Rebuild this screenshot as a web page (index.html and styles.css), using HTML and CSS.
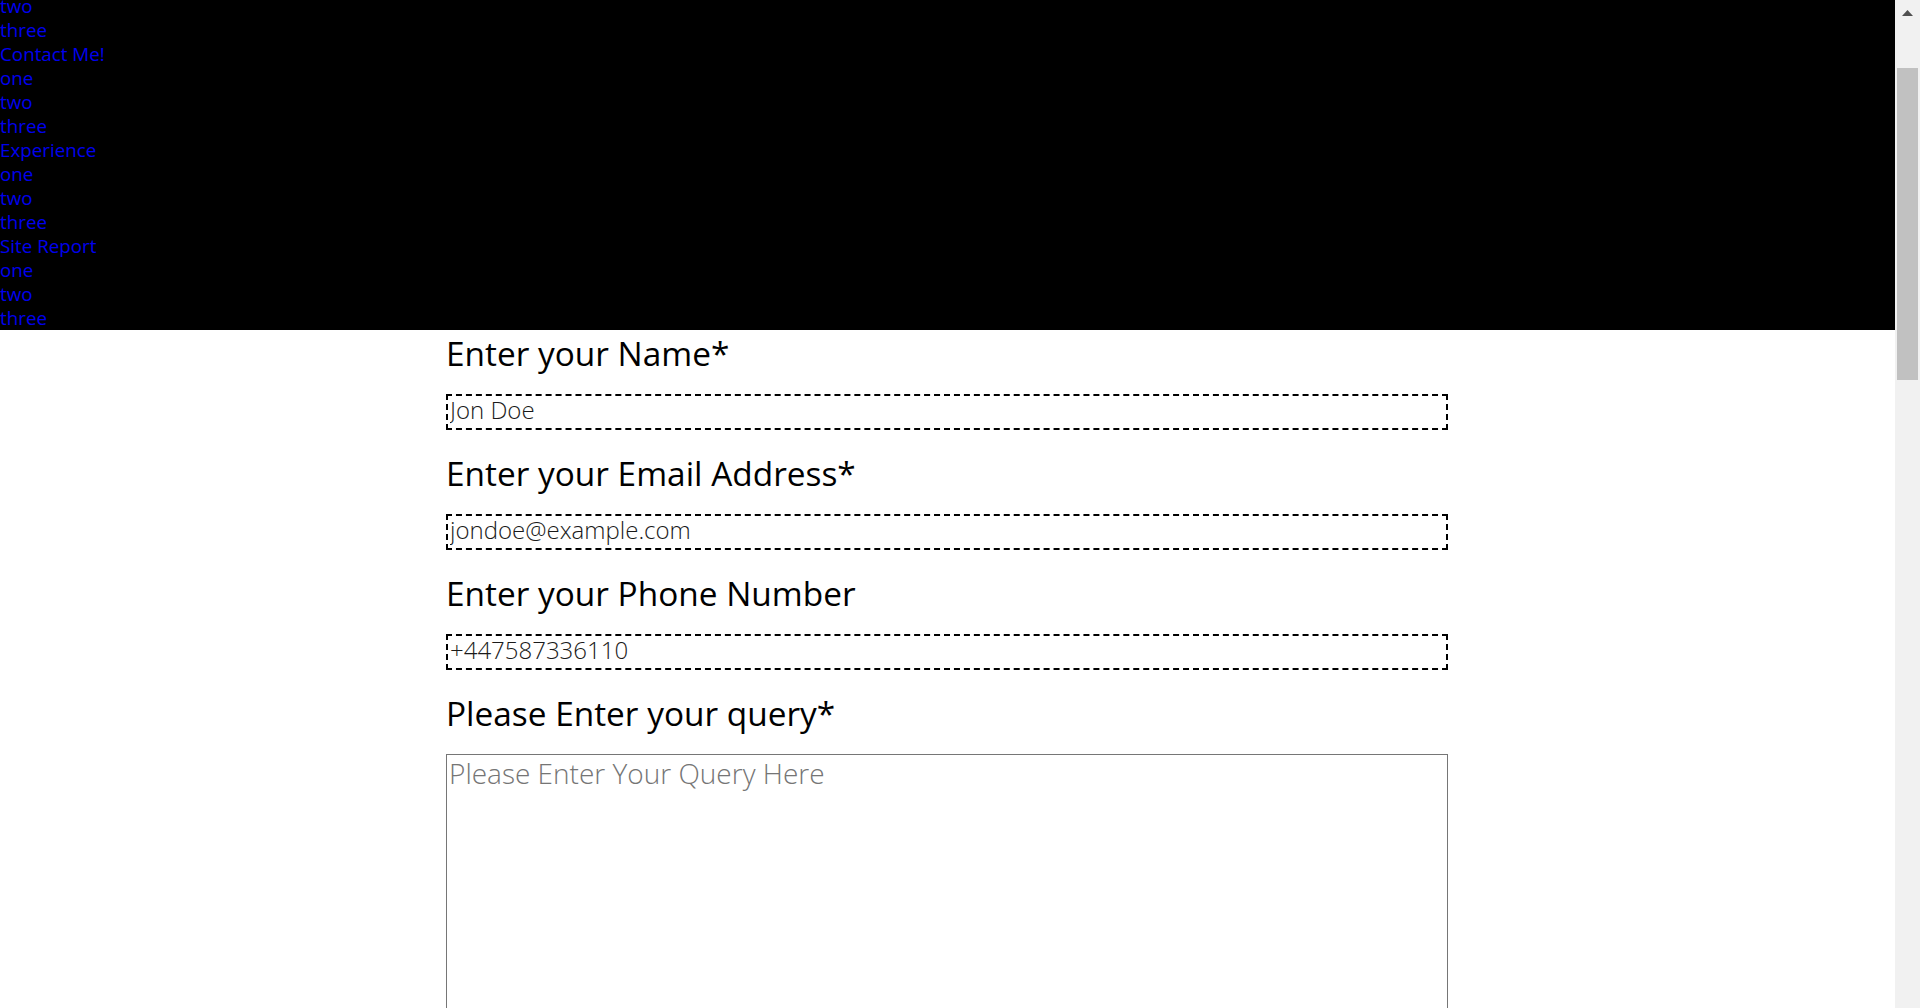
FILE: index.html
```html
<!DOCTYPE html>
<html lang="en">
<head>
<meta charset="utf-8">
<title>Contact Me!</title>
<link rel="stylesheet" href="styles.css">
</head>
<body>
<nav class="site-nav">
  <ul class="nav-list">
    <li class="nav-group"><a class="nav-link" href="#">Home</a>
      <ul class="sub-list">
        <li><a class="nav-link" href="#">one</a></li>
        <li><a class="nav-link" href="#">two</a></li>
        <li><a class="nav-link" href="#">three</a></li>
      </ul>
    </li>
    <li class="nav-group"><a class="nav-link" href="#">About Me</a>
      <ul class="sub-list">
        <li><a class="nav-link" href="#">one</a></li>
        <li><a class="nav-link" href="#">two</a></li>
        <li><a class="nav-link" href="#">three</a></li>
      </ul>
    </li>
    <li class="nav-group"><a class="nav-link" href="#">Contact Me!</a>
      <ul class="sub-list">
        <li><a class="nav-link" href="#">one</a></li>
        <li><a class="nav-link" href="#">two</a></li>
        <li><a class="nav-link" href="#">three</a></li>
      </ul>
    </li>
    <li class="nav-group"><a class="nav-link" href="#">Experience</a>
      <ul class="sub-list">
        <li><a class="nav-link" href="#">one</a></li>
        <li><a class="nav-link" href="#">two</a></li>
        <li><a class="nav-link" href="#">three</a></li>
      </ul>
    </li>
    <li class="nav-group"><a class="nav-link" href="#">Site Report</a>
      <ul class="sub-list">
        <li><a class="nav-link" href="#">one</a></li>
        <li><a class="nav-link" href="#">two</a></li>
        <li><a class="nav-link" href="#">three</a></li>
      </ul>
    </li>
  </ul>
</nav>
<main class="contact">
  <form class="contact-form" action="#">
    <label class="field-label" for="name">Enter your Name*</label>
    <input class="field-input" id="name" type="text" value="Jon Doe">
    <label class="field-label" for="email">Enter your Email Address*</label>
    <input class="field-input" id="email" type="email" value="jondoe@example.com">
    <label class="field-label" for="phone">Enter your Phone Number</label>
    <input class="field-input" id="phone" type="tel" value="+447587336110">
    <label class="field-label" for="query">Please Enter your query*</label>
    <textarea class="field-area" id="query" placeholder="Please Enter Your Query Here"></textarea>
    <button class="submit-btn" type="submit">Submit</button>
  </form>
</main>
<div class="fake-scrollbar" aria-hidden="true">
  <div class="sb-button">
    <svg class="sb-arrow" width="11" height="6" viewBox="0 0 11 6"><path d="M5.5 0 L11 6 L0 6 Z" fill="#505050"/></svg>
  </div>
  <div class="sb-track">
    <div class="sb-thumb"></div>
  </div>
</div>
<script src="script.js"></script>
</body>
</html>
```

FILE: styles.css
```css
html {
  scroll-behavior: auto;
}

body {
  margin: 0 25px 0 0;
  background: #ffffff;
  font-family: "Open Sans", "Noto Sans", sans-serif;
  color: #000000;
}

.site-nav {
  background: #000000;
  padding-top: 15px;
}

.nav-list,
.sub-list {
  list-style: none;
  margin: 0;
  padding: 0;
}

.nav-link {
  display: block;
  color: #0000ee;
  text-decoration: none;
  font-size: 18.8px;
  line-height: 24px;
}

.contact {
  width: 1003px;
  margin: 0 auto;
  padding-top: 3px;
  padding-bottom: 60px;
}

.contact-form {
  display: flex;
  flex-direction: column;
  align-items: flex-start;
}

.field-label {
  display: block;
  font-size: 33.4px;
  line-height: 40px;
  margin: 0 0 21px;
  color: #000000;
}

.field-input {
  box-sizing: border-box;
  width: 1002px;
  height: 36px;
  margin: 0 0 23px;
  padding: 0 2px 5px;
  border: 2px dashed #000000;
  border-radius: 0;
  background: #ffffff;
  font-family: "Open Sans", "Noto Sans", sans-serif;
  font-weight: 300;
  font-size: 24px;
  color: #1a1a1a;
  outline: none;
}

.field-area {
  box-sizing: border-box;
  width: 1002px;
  height: 2100px;
  margin: 0;
  padding: 2px;
  border: 1px solid #767676;
  border-radius: 0;
  font-family: "Open Sans", "Noto Sans", sans-serif;
  font-weight: 300;
  font-size: 28px;
  line-height: 32px;
  color: #000000;
  resize: vertical;
}

.field-area::placeholder {
  color: #757575;
}

.submit-btn {
  margin-top: 20px;
  font-family: "Open Sans", "Noto Sans", sans-serif;
  font-size: 24px;
  padding: 6px 20px;
}

.fake-scrollbar {
  position: fixed;
  top: 0;
  right: 0;
  width: 25px;
  height: 100vh;
  background: #f1f1f1;
  display: flex;
  flex-direction: column;
}

.sb-button {
  flex: 0 0 25px;
  display: flex;
  align-items: center;
  justify-content: center;
}

.sb-track {
  flex: 1 1 auto;
  padding: 43px 2px 0;
}

.sb-thumb {
  height: 312px;
  background: #c1c1c1;
}
```

FILE: script.js
```js
window.scrollTo(0, 165);
window.addEventListener('load', function () {
  window.scrollTo(0, 165);
});
```
